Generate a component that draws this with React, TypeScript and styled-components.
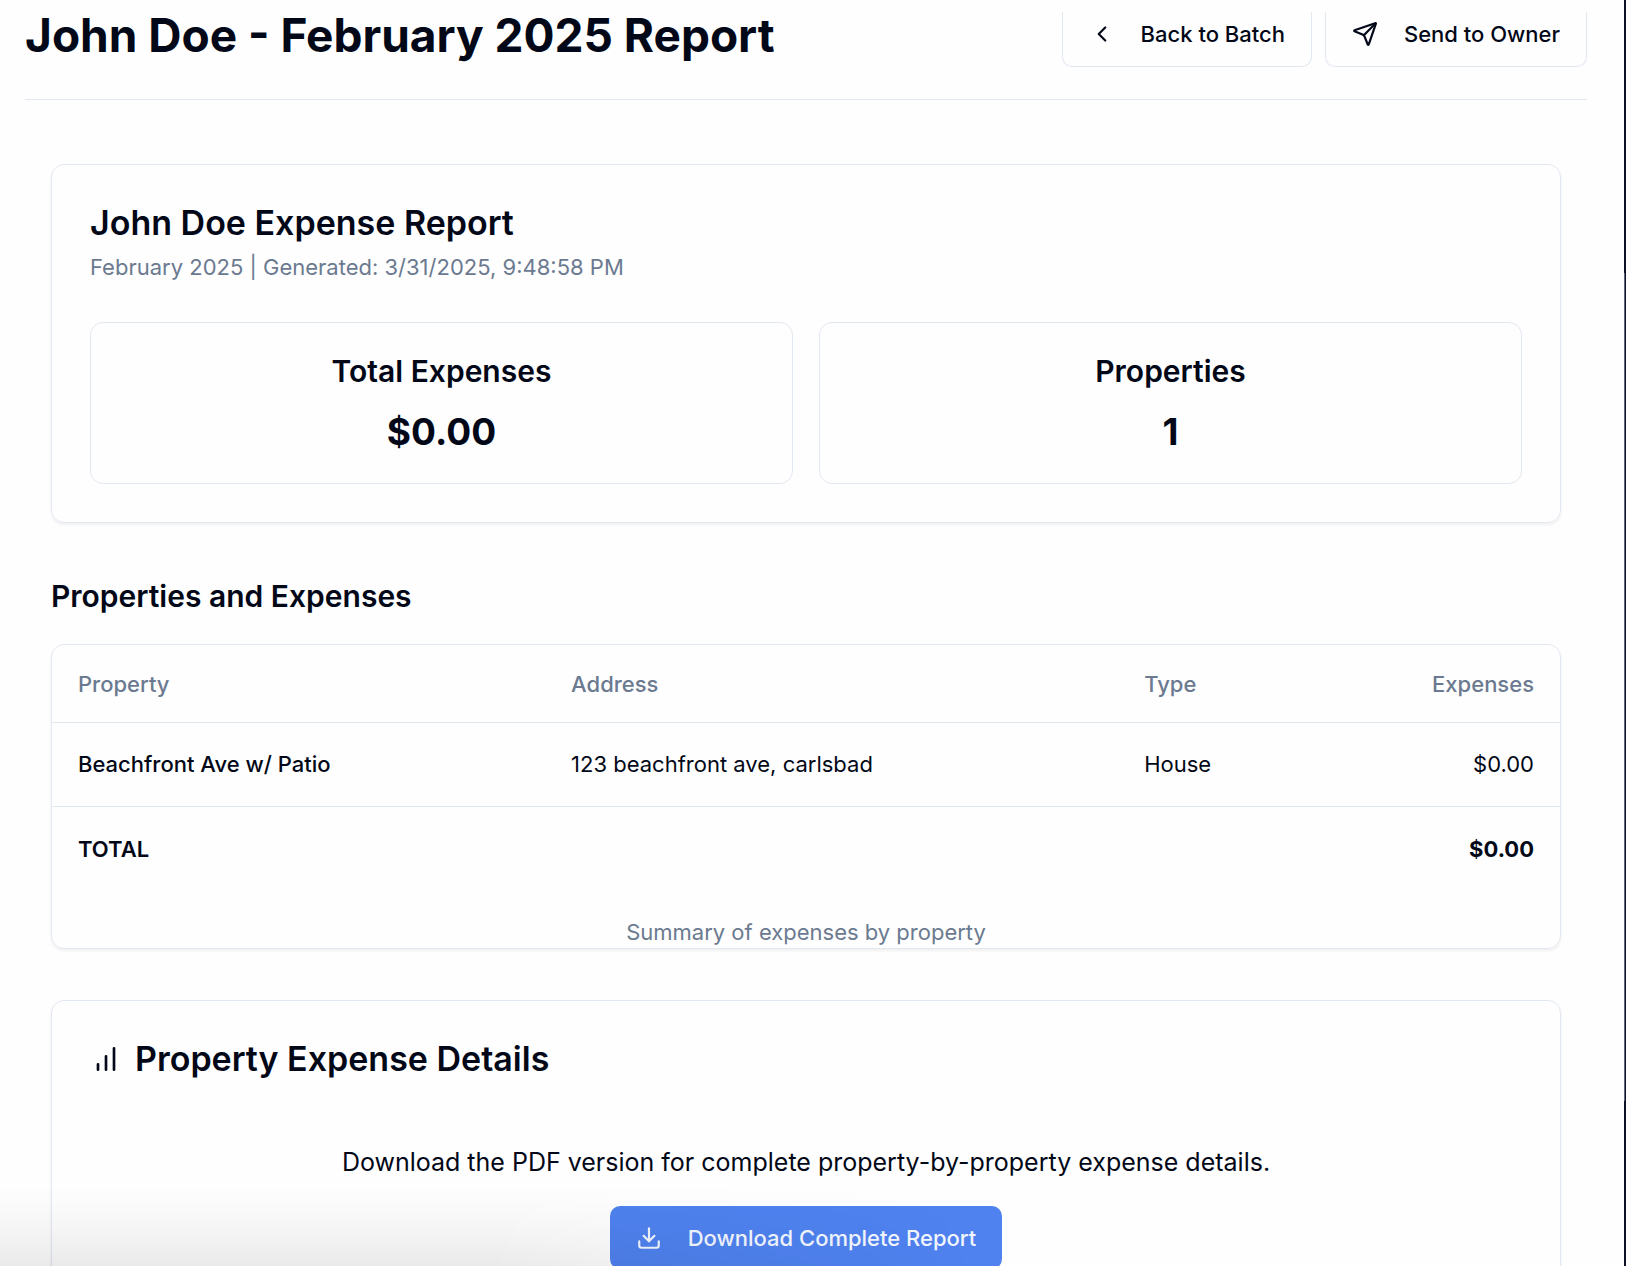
import React from "react";
import styled, { createGlobalStyle } from "styled-components";
import { ChevronLeft, Send, Download } from "lucide-react";

const ink = "#020817";
const muted = "#6b7a90";
const line = "#e2e8f0";
const edge = "#0d1225";
const shadow = "0 2px 3px rgba(0, 0, 0, 0.06)";

const GlobalStyle = createGlobalStyle`
  * { box-sizing: border-box; }
  body {
    margin: 0;
    background: #fefefe;
    color: ${ink};
    font-family: Inter, "Liberation Sans", sans-serif;
    font-size: 22px;
    line-height: 32px;
  }
  h1, h2, h3, p { margin: 0; }
`;

const Window = styled.div`
  display: flex;
  height: 100vh;
  overflow: hidden;
  position: relative;
`;

const Viewport = styled.div`
  flex: 1;
  min-width: 0;
  padding: 12px 37px 0 25px;
`;

const WindowEdge = styled.div`
  flex: 0 0 2px;
  background:
    linear-gradient(${edge} 21.6%, #5f6778 21.6%, #5f6778 87%, ${edge} 87%) left / 1px 100% no-repeat,
    ${edge};
`;

const Header = styled.header`
  display: flex;
  justify-content: space-between;
  align-items: flex-start;
  padding-bottom: 32px;
  border-bottom: 1px solid ${line};
`;

const PageTitle = styled.h1`
  font-size: 46px;
  line-height: 46px;
  font-weight: 700;
`;

const Actions = styled.div`
  display: flex;
  gap: 13px;
`;

const Button = styled.button`
  display: inline-flex;
  align-items: center;
  gap: 26px;
  height: 63px;
  padding: 0 26px;
  border: 0;
  border-radius: 10px;
  background: #4f82ef;
  color: #f1f5fd;
  font: inherit;
  font-weight: 500;
  white-space: nowrap;
`;

const HeaderButton = styled(Button)`
  height: 55px;
  padding-bottom: 10px;
  border: 1px solid ${line};
  border-top: 0;
  border-radius: 0 0 10px 10px;
  background: #fefefe;
  color: ${ink};
`;

const Content = styled.main`
  display: flex;
  flex-direction: column;
  gap: 51px;
  padding: 64px 26px 0;
`;

const Card = styled.section<{ $padded?: boolean }>`
  padding: ${(p) => (p.$padded ? "38px" : "0")};
  border: 1px solid ${line};
  border-radius: 13px;
  box-shadow: ${shadow};
`;

const CardTitle = styled.h2`
  display: flex;
  align-items: center;
  gap: 13px;
  font-size: 34px;
  line-height: 40px;
  font-weight: 600;
`;

const Meta = styled.p`
  margin-top: 8px;
  color: ${muted};
`;

const Stats = styled.div`
  display: grid;
  grid-template-columns: 1fr 1fr;
  gap: 26px;
  margin-top: 39px;
`;

const Stat = styled.div`
  padding: 26px;
  border: 1px solid ${line};
  border-radius: 13px;
  text-align: center;
`;

const StatLabel = styled.h3`
  font-size: 30px;
  line-height: 45px;
  font-weight: 600;
`;

const StatValue = styled.p`
  margin-top: 13px;
  font-size: 37px;
  line-height: 50px;
  font-weight: 700;
`;

const SectionTitle = styled.h2`
  margin-bottom: 25px;
  font-size: 30px;
  line-height: 45px;
  font-weight: 600;
`;

const Table = styled.table`
  width: 100%;
  border-collapse: collapse;
  table-layout: fixed;
  caption-side: bottom;
`;

const Caption = styled.caption`
  padding-top: 24px;
  color: ${muted};
`;

const Row = styled.tr<{ $total?: boolean }>`
  height: ${(p) => (p.$total ? "86px" : "84px")};
  border-top: 1px solid ${line};
`;

const Cell = styled.td<{ $end?: boolean; $weight?: number }>`
  padding: 0 26px;
  text-align: ${(p) => (p.$end ? "right" : "left")};
  font-weight: ${(p) => p.$weight ?? 400};
`;

const HeadCell = styled.th<{ $end?: boolean; $width: string }>`
  width: ${(p) => p.$width};
  height: 77px;
  padding: 2px 26px 0;
  color: ${muted};
  font-weight: 500;
  text-align: ${(p) => (p.$end ? "right" : "left")};
`;

const DownloadArea = styled.div`
  display: flex;
  flex-direction: column;
  align-items: center;
  gap: 25px;
  margin-top: 64px;
`;

const Lead = styled.p`
  font-size: 25px;
  line-height: 38px;
`;

const StatusShade = styled.div`
  position: absolute;
  left: 0;
  bottom: 0;
  width: 60%;
  height: 80px;
  pointer-events: none;
  background: linear-gradient(to top, rgba(0, 0, 0, 0.08), rgba(0, 0, 0, 0.03) 50%, transparent);
  mask-image: linear-gradient(to right, #000 50%, transparent);
`;

function BarsIcon() {
  return (
    <svg
      width="32"
      height="32"
      viewBox="0 0 24 24"
      fill="none"
      stroke="currentColor"
      strokeWidth="2"
      strokeLinecap="round"
      aria-hidden="true"
    >
      <path d="M6 20v-4M12 20V10M18 20V4" />
    </svg>
  );
}

export default function App() {
  return (
    <Window>
      <GlobalStyle />
      <Viewport>
        <Header>
          <PageTitle>John Doe - February 2025 Report</PageTitle>
          <Actions>
            <HeaderButton type="button"><ChevronLeft size={26} />Back to Batch</HeaderButton>
            <HeaderButton type="button"><Send size={26} />Send to Owner</HeaderButton>
          </Actions>
        </Header>
        <Content>
          <Card $padded>
            <CardTitle>John Doe Expense Report</CardTitle>
            <Meta>February 2025 | Generated: 3/31/2025, 9:48:58 PM</Meta>
            <Stats>
              <Stat>
                <StatLabel>Total Expenses</StatLabel>
                <StatValue>$0.00</StatValue>
              </Stat>
              <Stat>
                <StatLabel>Properties</StatLabel>
                <StatValue>1</StatValue>
              </Stat>
            </Stats>
          </Card>
          <div>
            <SectionTitle>Properties and Expenses</SectionTitle>
            <Card>
              <Table>
                <Caption>Summary of expenses by property</Caption>
                <thead>
                  <tr>
                    <HeadCell $width="32.7%">Property</HeadCell>
                    <HeadCell $width="38%">Address</HeadCell>
                    <HeadCell $width="14.3%">Type</HeadCell>
                    <HeadCell $width="15%" $end>Expenses</HeadCell>
                  </tr>
                </thead>
                <tbody>
                  <Row>
                    <Cell $weight={500}>Beachfront Ave w/ Patio</Cell>
                    <Cell>123 beachfront ave, carlsbad</Cell>
                    <Cell>House</Cell>
                    <Cell $end>$0.00</Cell>
                  </Row>
                  <Row $total>
                    <Cell colSpan={3} $weight={600}>TOTAL</Cell>
                    <Cell $end $weight={700}>$0.00</Cell>
                  </Row>
                </tbody>
              </Table>
            </Card>
          </div>
          <Card $padded>
            <CardTitle>
              <BarsIcon />
              Property Expense Details
            </CardTitle>
            <DownloadArea>
              <Lead>Download the PDF version for complete property-by-property expense details.</Lead>
              <Button type="button"><Download size={26} />Download Complete Report</Button>
            </DownloadArea>
          </Card>
        </Content>
      </Viewport>
      <WindowEdge />
      <StatusShade />
    </Window>
  );
}
